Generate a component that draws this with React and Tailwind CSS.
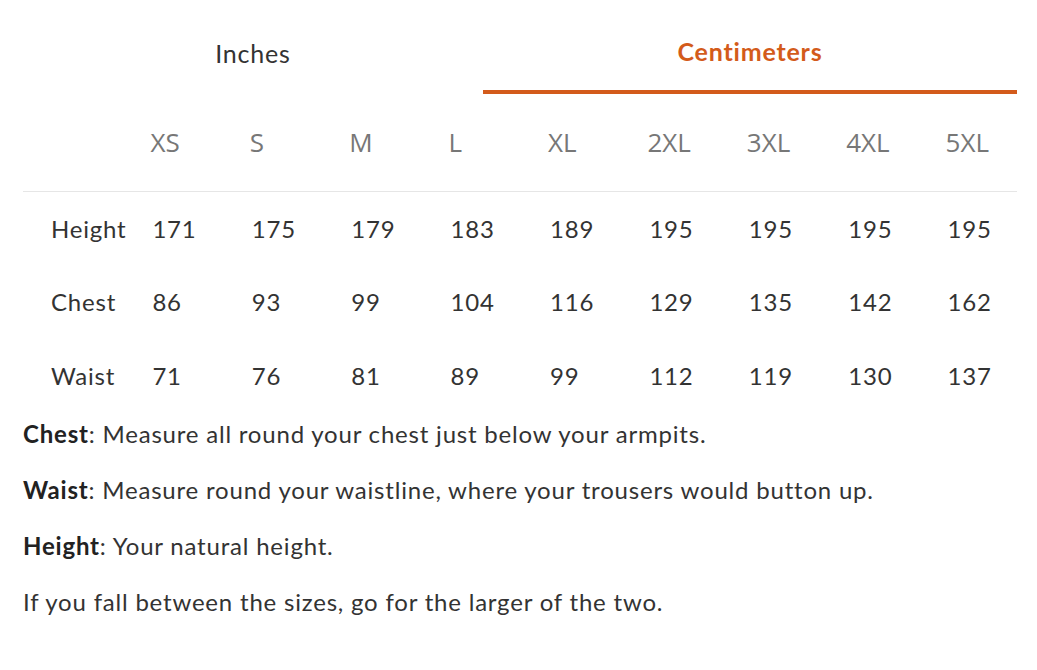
import { useState } from 'react';

const sizes = ['XS', 'S', 'M', 'L', 'XL', '2XL', '3XL', '4XL', '5XL'];

const rows = [
  { label: 'Height', values: [171, 175, 179, 183, 189, 195, 195, 195, 195] },
  { label: 'Chest', values: [86, 93, 99, 104, 116, 129, 135, 142, 162] },
  { label: 'Waist', values: [71, 76, 81, 89, 99, 112, 119, 130, 137] },
];

const notes = [
  { term: 'Chest', text: 'Measure all round your chest just below your armpits.' },
  { term: 'Waist', text: 'Measure round your waistline, where your trousers would button up.' },
  { term: 'Height', text: 'Your natural height.' },
];

export default function App() {
  const [unit, setUnit] = useState('cm');

  return (
    <div className="bg-white min-h-[670px] pl-[23px] pr-[20px] text-[#333] tracking-[0.8px] font-['Lato','Open_Sans',sans-serif]">
      {/* Unit tabs */}
      <div className="flex">
        <button
          onClick={() => setUnit('in')}
          className={`w-[460px] h-[94px] pt-[13px] flex items-center justify-center text-[25px] ${
            unit === 'in' ? 'text-[#d35b1b] font-bold border-b-4 border-[#d35b1b]' : 'text-[#333]'
          }`}
        >
          Inches
        </button>
        <button
          onClick={() => setUnit('cm')}
          className={`flex-1 h-[94px] pt-[13px] flex items-center justify-center text-[25px] ${
            unit === 'cm' ? 'text-[#d35b1b] font-bold border-b-4 border-[#d35b1b]' : 'text-[#333]'
          }`}
        >
          Centimeters
        </button>
      </div>

      {/* Size table */}
      <div className="grid grid-cols-10">
        <div className="h-[98px] border-b border-[#e6e6e6]" />
        {sizes.map((s) => (
          <div
            key={s}
            className="h-[98px] pl-[28px] flex items-center border-b border-[#e6e6e6] text-[26px] tracking-normal font-medium text-[#777] font-['Open_Sans',sans-serif]"
          >
            {s}
          </div>
        ))}
        {rows.map((row) => (
          <div key={row.label} className="contents">
            <div className="h-[73.5px] pl-[28px] flex items-center text-[24px]">{row.label}</div>
            {row.values.map((v, i) => (
              <div key={i} className="h-[73.5px] pl-[30px] flex items-center text-[24px]">
                {v}
              </div>
            ))}
          </div>
        ))}
      </div>

      {/* Notes */}
      <div className="text-[24px] leading-[42px]">
        {notes.map((n, i) => (
          <p key={n.term} className={i === 0 ? '' : 'mt-[14px]'}>
            <span className="font-bold text-[#222]">{n.term}</span>: {n.text}
          </p>
        ))}
        <p className="mt-[14px]">If you fall between the sizes, go for the larger of the two.</p>
      </div>
    </div>
  );
}
